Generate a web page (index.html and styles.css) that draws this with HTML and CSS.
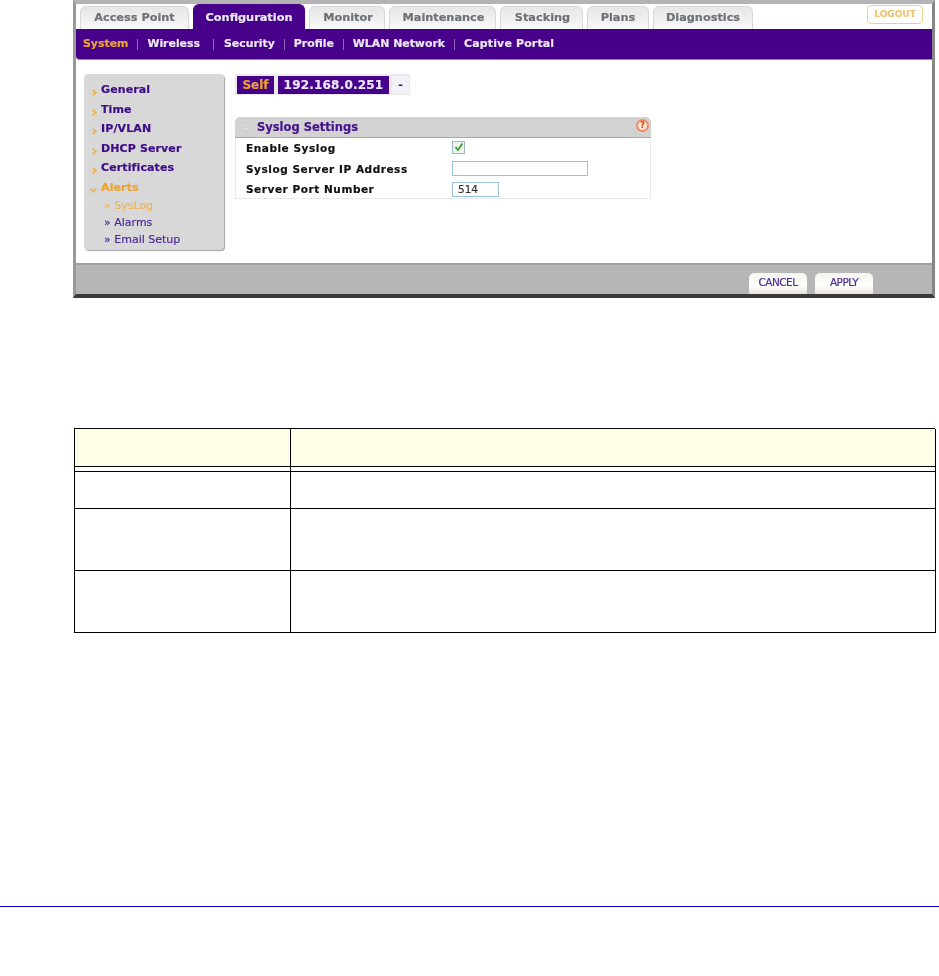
FILE: index.html
```html
<!DOCTYPE html>
<html lang="en">
<head>
<meta charset="utf-8">
<title>Syslog Settings</title>
<link rel="stylesheet" href="styles.css">
</head>
<body>
<div class="shot">
  <div class="tabs">
    <span class="tab t1">Access Point</span>
    <span class="tab active t2">Configuration</span>
    <span class="tab t3">Monitor</span>
    <span class="tab t4">Maintenance</span>
    <span class="tab t5">Stacking</span>
    <span class="tab t6">Plans</span>
    <span class="tab t7">Diagnostics</span>
    <span class="logout">LOGOUT</span>
  </div>
  <div class="nav">
    <span class="nav-item current">System</span><i class="sep"></i>
    <span class="nav-item">Wireless</span><i class="sep sep-wide"></i>
    <span class="nav-item">Security</span><i class="sep"></i>
    <span class="nav-item">Profile</span><i class="sep"></i>
    <span class="nav-item">WLAN Network</span><i class="sep"></i>
    <span class="nav-item wide-item">Captive Portal</span>
  </div>
  <div class="content">
    <div class="side">
      <div class="side-item"><i class="arrow"></i>General</div>
      <div class="side-item"><i class="arrow"></i>Time</div>
      <div class="side-item"><i class="arrow"></i>IP/VLAN</div>
      <div class="side-item"><i class="arrow"></i>DHCP Server</div>
      <div class="side-item"><i class="arrow"></i>Certificates</div>
      <div class="side-item open"><i class="arrow down"></i>Alerts</div>
      <div class="sub-item open">» SysLog</div>
      <div class="sub-item">» Alarms</div>
      <div class="sub-item">» Email Setup</div>
    </div>
    <div class="main">
      <div class="ap-bar">
        <span class="ap self">Self</span>
        <span class="ap ip">192.168.0.251</span>
        <span class="ap-dash">-</span>
      </div>
      <div class="panel">
        <div class="panel-head">
          <span class="grip"></span>
          <span class="panel-title">Syslog Settings</span>
          <span class="help">?</span>
        </div>
        <div class="panel-body">
          <div class="row"><span class="lbl">Enable Syslog</span>
            <span class="check"><svg width="12" height="12" viewBox="0 0 12 12"><path d="M2.5 6 L5 9 L9.5 2.5" fill="none" stroke="#3f9a3c" stroke-width="1.8"/></svg></span></div>
          <div class="row"><span class="lbl">Syslog Server IP Address</span><span class="field wide"></span></div>
          <div class="row"><span class="lbl">Server Port Number</span><span class="field short">514</span></div>
        </div>
      </div>
    </div>
  </div>
  <div class="foot">
    <span class="btn">CANCEL</span>
    <span class="btn">APPLY</span>
  </div>
</div>
<div class="grid">
  <div class="cell head"></div><div class="cell head"></div>
  <div class="gap"></div><div class="gap"></div>
  <div class="cell r1"></div><div class="cell r1"></div>
  <div class="cell r2"></div><div class="cell r2"></div>
  <div class="cell r2"></div><div class="cell r2"></div>
</div>
<div class="rule"></div>
</body>
</html>
```
FILE: styles.css
```css
* { box-sizing: border-box; }
html, body { margin: 0; padding: 0; background: #fff; }
body { width: 939px; height: 976px; overflow: hidden; font-family: "DejaVu Sans", sans-serif; }

.shot {
  width: 862px; height: 298px; margin-left: 73px;
  background: #fff;
  border-left: 3px solid #999;
  border-right: 3px solid #868686;
  border-bottom: 4px solid #3a3a3a;
  border-top: 4px solid #b4b4b4;
  display: flex; flex-direction: column;
  filter: blur(0.35px);
  -webkit-text-stroke: .2px;
}
.tabs { height: 25px; display: flex; align-items: flex-end; padding-left: 4px; gap: 4px; position: relative; }
.tab {
  height: 23px; display: flex; align-items: center; justify-content: center;
  background: linear-gradient(#e6e6e6, #f8f8f8);
  border: 1px solid #d8d8d8; border-bottom: 0; border-radius: 6px 6px 0 0;
  font-size: 11.3px; font-weight: bold; color: #6d7178; padding-bottom: 2px;
}
.t1 { width: 109px; }
.t2 { width: 112px; background: #47008a; border-color: #47008a; color: #ecebf4; height: 25px; padding-bottom: 0; }
.t3 { width: 76px; padding-left: 2px; }
.t4 { width: 107px; padding-left: 2px; }
.t5 { width: 83px; padding-left: 2px; }
.t6 { width: 62px; }
.t7 { width: 100px; }
.logout {
  position: absolute; right: 9px; top: 1px; width: 56px; height: 19px;
  border: 1px solid #f2cf86; border-radius: 4px; background: #fff;
  color: #efc26c; font-size: 9px; font-weight: bold; text-align: center; line-height: 17px;
}
.nav {
  height: 31px; background: #47008a; display: flex; align-items: center; padding: 0 0 0 7px;
  border-bottom: 1px solid #8d8d8d; border-radius: 0 0 0 4px;
}
.nav-item { font-size: 10.9px; font-weight: bold; color: #ece8f3; line-height: 14px; }
.nav-item.current { color: #eda32e; }
.wide-item { letter-spacing: .2px; }
.sep { width: 1px; height: 11px; background: #8e6db5; margin: 0 9px; }
.sep-wide { margin: 0 10px 0 13px; }
.content { flex: 1; display: flex; background: #fff; padding: 14px 0 0 8px; gap: 11px; min-height: 0; }

.side {
  width: 140px; height: 176px; background: #d8d8d8; border-radius: 4px;
  box-shadow: 1px 1px 1px #a5a5a5; padding: 6px 0 0 8px;
}
.side-item { position: relative; height: 19.6px; font-size: 11px; font-weight: bold; letter-spacing: .12px; color: #3f0c88; line-height: 19px; padding-left: 9px; }
.side-item.open { color: #eda32e; }
.arrow {
  position: absolute; left: -1px; top: 10px; width: 5px; height: 5px;
  border-right: 2px solid #efb45a; border-bottom: 2px solid #efb45a;
  transform: rotate(-45deg);
}
.arrow.down { transform: rotate(45deg); top: 9px; }
.sub-item { height: 16.8px; font-size: 11px; color: #4d2b96; line-height: 16px; padding-left: 12px; }
.sub-item.open { color: #efb45a; height: 17.5px; line-height: 15px; }

.main { width: 416px; }
.ap-bar {
  display: flex; width: 175px; height: 21px; background: #e9e9e9; padding: 2px 0 1px 2px; align-items: stretch;
}
.ap { background: #47008a; font-size: 12px; font-weight: bold; display: flex; align-items: center; justify-content: center; }
.self { width: 37px; color: #eda32e; }
.ip { width: 111px; margin-left: 4px; color: #ece8f3; letter-spacing: .2px; }
.ap-dash { width: 17px; margin-left: 3px; background: #f2f2f8; font-size: 11px; font-weight: bold; color: #47128c; text-align: center; line-height: 17px; }
.panel { margin-top: 22px; }
.panel-head {
  height: 21px; background: #d2d2d2; border-radius: 5px 5px 0 0; border-bottom: 1px solid #aaa;
  display: flex; align-items: center; position: relative; padding-left: 8px;
}
.grip { width: 8px; height: 7px; opacity: .6; background: radial-gradient(#fff 40%, transparent 45%) 0 0 / 3px 3px; margin-right: 6px; }
.panel-title { font-size: 11.5px; font-weight: bold; color: #47128c; }
.help {
  position: absolute; right: 2px; top: 2px; width: 13px; height: 13px; border-radius: 50%;
  border: 2px solid #f08a5c; background: #fbe6d8; color: #d9531e; font-size: 8px; font-weight: bold; text-align: center; line-height: 9px;
}
.panel-body { border: 1px solid #e6ebf0; border-top: 0; height: 61px; padding: 0 0 0 10px; }
.row { height: 20.5px; display: flex; align-items: center; font-size: 10.5px; font-weight: bold; color: #111; }
.lbl { width: 206px; letter-spacing: .55px; }
.check { width: 13px; height: 13px; margin-top: -2px; border: 1px solid #9fb4c4; background: #eef5ea; display: flex; align-items: center; justify-content: center; }
.check svg { flex: none; }
.field { height: 15px; border: 1px solid #9cc0e0; background: #fff; font-size: 10.5px; font-weight: normal; color: #333; padding-left: 5px; line-height: 13px; }
.wide { width: 136px; }
.short { width: 47px; }
.foot {
  height: 31px; background: #b6b6b6; border-top: 2px solid #a2a2a2;
  display: flex; justify-content: flex-end; align-items: flex-start; gap: 8px; padding: 8px 59px 0 0;
}
.btn {
  width: 58px; height: 21px; border-radius: 5px 5px 0 0; background: linear-gradient(#f4f4f0, #fff 60%, #e8e4d8);
  color: #4f2c96; font-size: 10.5px; letter-spacing: -.5px; text-align: center; line-height: 19px;
}

.grid {
  width: 861px; margin: 130px 0 0 74px;
  display: grid; grid-template-columns: 216px 645px;
  border-top: 1px solid #000; border-left: 1px solid #000;
}
.cell { border-right: 1px solid #000; border-bottom: 1px solid #000; }
.head { height: 38px; background: #ffffe8; }
.gap { height: 5px; border-right: 1px solid #000; border-bottom: 1px solid #000; }
.r1 { height: 37px; }
.r2 { height: 62px; }
.rule { height: 1px; background: #0000cc; margin-top: 273px; }
```
